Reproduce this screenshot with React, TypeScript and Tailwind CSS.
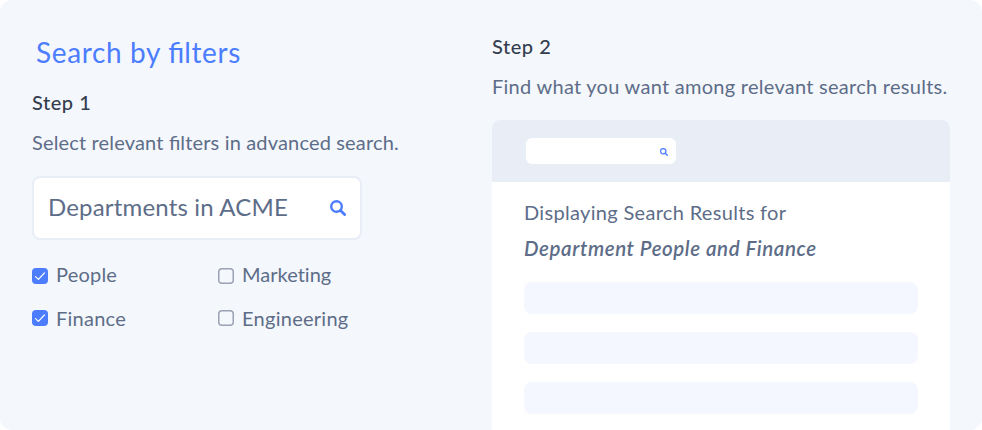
import React from "react";

const BAR_KEYS = ["first", "second", "third"];

function SearchIcon({ className }: { className: string }) {
  return (
    <svg viewBox="0 0 16 16" fill="none" stroke="currentColor" className={className}>
      <circle cx="6.5" cy="6.5" r="5.3" strokeWidth="2.4" />
      <path d="M10.5 10.5 L14.6 14.6" strokeWidth="2.8" strokeLinecap="round" />
    </svg>
  );
}

function Filter({ label, checked, tracking, top }: { label: string; checked?: boolean; tracking: string; top: string }) {
  return (
    <div className="flex h-7 items-start gap-2">
      <svg viewBox="0 0 16 16" className={`${top} size-4 shrink-0`} fill="none" strokeLinecap="round" strokeLinejoin="round">
        {checked ? (
          <>
            <rect width="16" height="16" rx="4" fill="#4c7dff" />
            <path d="M3.5 8.6 L6.4 11.4 L12.5 4.9" stroke="#fff" strokeWidth="1.3" />
          </>
        ) : (
          <rect x="0.75" y="0.75" width="14.5" height="14.5" rx="3.25" stroke="#9ba2b3" strokeWidth="1.5" />
        )}
      </svg>
      <span className={`text-[20px] leading-7 whitespace-nowrap ${tracking}`}>{label}</span>
    </div>
  );
}

export default function App() {
  return (
    <div className="h-[430px] w-[982px] overflow-hidden bg-white font-['Lato',sans-serif] text-[#5d6d88]">
      <main className="flex h-full items-start rounded-xl bg-[#f4f7fc]">
        <section className="w-[492px] shrink-0 pt-8 pl-8">
          <h1 className="pl-1 text-[28px] leading-10 tracking-[0.64px] whitespace-nowrap text-[#4c7dff]">
            Search by <span className="tracking-normal">fi</span>lters
          </h1>
          <h2 className="mt-4 text-[20px] leading-7 font-medium tracking-[0.55px] text-[#353e50]">Step 1</h2>
          <p className="mt-3 text-[20px] leading-7 tracking-[0.16px] whitespace-nowrap">
            Select relevant <span className="tracking-normal">fi</span>lters in advanced search.
          </p>
          <div className="mt-5 flex h-16 w-[330px] items-center justify-between rounded-lg border-2 border-[#e9edf5] bg-white pr-3.5 pl-3.5">
            <span className="pb-0.5 text-[24px] leading-8 tracking-[0.17px] whitespace-nowrap">Departments in ACME</span>
            <SearchIcon className="size-4 text-[#4c7dff]" />
          </div>
          <div className="mt-5 grid grid-cols-[186px_186px] gap-y-4">
            <Filter label="People" checked tracking="tracking-[0.2px]" top="mt-2" />
            <Filter label="Marketing" tracking="tracking-[0.02px]" top="mt-2" />
            <Filter label="Finance" checked tracking="tracking-[0.25px]" top="mt-1.5" />
            <Filter label="Engineering" tracking="tracking-[0.27px]" top="mt-1.5" />
          </div>
        </section>
        <section className="w-[458px] shrink-0 pt-8">
          <h2 className="text-[20px] leading-7 font-medium tracking-[0.55px] text-[#353e50]">Step 2</h2>
          <p className="mt-3 text-[20px] leading-7 tracking-[0.27px] whitespace-nowrap">Find what you want among relevant search results.</p>
          <div className="mt-5 h-[310px] overflow-hidden rounded-t-lg bg-white">
            <div className="flex h-[62px] items-center bg-[#e9edf5] pl-[34px]">
              <div className="flex h-[26px] w-[150px] items-center justify-end rounded-md bg-white pt-0.5 pr-2">
                <SearchIcon className="size-2 text-[#4c7dff]" />
              </div>
            </div>
            <div className="px-8 pt-4">
              <p className="text-[20px] leading-7 tracking-[0.32px] whitespace-nowrap">Displaying Search Results for</p>
              <p className="mt-2 text-[20.5px] leading-7 font-semibold tracking-[0.58px] whitespace-nowrap italic">Department People and Finance</p>
              <div className="mt-5 flex flex-col gap-[18px]">
                {BAR_KEYS.map((key) => (
                  <div key={key} className="h-8 rounded-lg bg-[#f4f7ff]" />
                ))}
              </div>
            </div>
          </div>
        </section>
      </main>
    </div>
  );
}
